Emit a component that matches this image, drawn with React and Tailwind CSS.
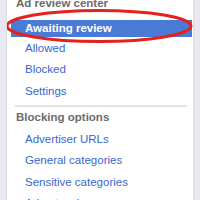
import React from "react";

const font = { fontFamily: '"Liberation Sans", Arial, sans-serif' };

export default function App() {
  const link = "h-[21.5px] flex items-center pl-[26px] text-[11.5px] text-[#3a66d0]";
  return (
    <div className="w-[200px] h-[200px] overflow-hidden flex items-start bg-[#e7e8f2]" style={font}>
      <div className="w-[7px] h-[200px] shrink-0 border-r border-[#d8dae6]" />
      <div className="relative w-[188px] h-[200px] shrink-0 bg-white border-r-2 border-[#e2e2e6] overflow-hidden">
        <div className="mt-[-5px] h-[17px] flex items-center pl-[9px] text-[11.5px] font-bold text-[#6b6b6b]">
          Ad review center
        </div>
        <div className="mt-[8px] ml-[4px] mr-[1px] h-[17px] bg-[#4a7bd7] flex items-center pl-[14px] text-[11.5px] font-bold text-white">
          Awaiting review
        </div>
        <div className="pt-[0.5px] -ml-[8px]">
          <div className={link}>Allowed</div>
          <div className={link}>Blocked</div>
          <div className={link + " h-[22px]"}>Settings</div>
        </div>
        <div className="mt-[2px] ml-[8px] mr-[6px] h-[2px] bg-[#e2e2e6]" />
        <div className="h-[22px] flex items-center pl-[9px] text-[11.5px] font-bold text-[#6b6b6b]">
          Blocking options
        </div>
        <div className="-ml-[8px]">
          <div className={link}>Advertiser URLs</div>
          <div className={link}>General categories</div>
          <div className={link}>Sensitive categories</div>
          <div className={link}>Ad networks</div>
        </div>
        <svg className="absolute left-[-2px] top-[8px] pointer-events-none" width="192" height="36" viewBox="0 0 192 36">
          <ellipse cx="94" cy="18" rx="92" ry="15.5" fill="none" stroke="#e5211b" strokeWidth="3" />
        </svg>
      </div>
      <div className="flex-1 h-[200px]" />
    </div>
  );
}
